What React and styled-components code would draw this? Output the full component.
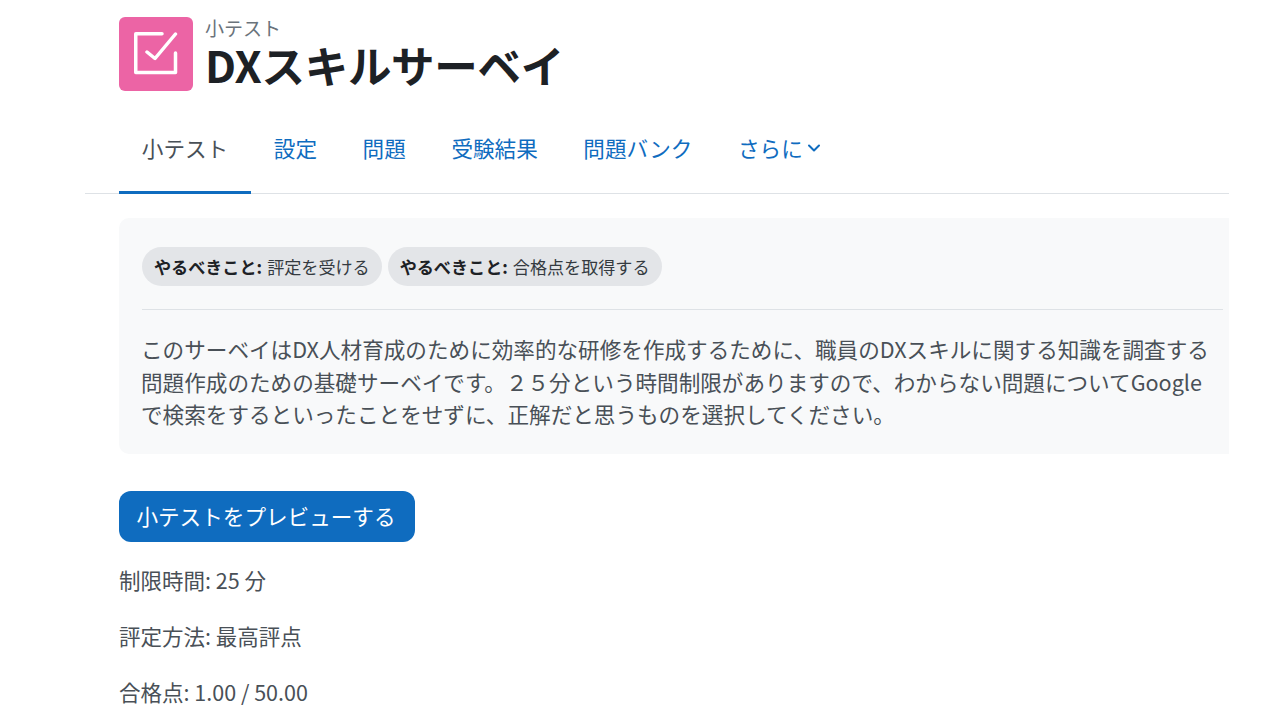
import React from 'react';
import styled, { createGlobalStyle } from 'styled-components';
import { ChevronDown } from 'lucide-react';

const GlobalStyle = createGlobalStyle`
  html, body {
    margin: 0;
    padding: 0;
    background: #fff;
    overflow: hidden;
  }
  body {
    font-family: "Noto Sans CJK JP", "Open Sans", sans-serif;
    color: #1d2125;
  }
`;

const Page = styled.div`
  width: 1144px;
  height: 720px;
  margin-left: 85px;
  overflow: hidden;
`;

const Header = styled.header`
  display: flex;
  align-items: flex-start;
  gap: 12px;
  padding: 17px 0 0 34px;
  height: 99px;
  box-sizing: border-box;
`;

const ActivityIcon = styled.div`
  width: 74px;
  height: 74px;
  border-radius: 6px;
  background: #ec64a5;
  display: flex;
  align-items: center;
  justify-content: center;
  flex: none;
`;

const TitleBlock = styled.div`
  display: flex;
  flex-direction: column;
  margin-top: -1px;
`;

const Kicker = styled.div`
  font-size: 19px;
  line-height: 24px;
  color: #6a737b;
`;

const Title = styled.h1`
  margin: 0;
  font-size: 43.5px;
  line-height: 49px;
  font-weight: 700;
  letter-spacing: -0.3px;
  color: #1d2125;
  white-space: nowrap;
`;

const Tabs = styled.nav`
  display: flex;
  height: 94px;
  padding-left: 34px;
  border-bottom: 1px solid #dee2e6;
`;

const Tab = styled.a`
  display: flex;
  align-items: center;
  padding: 4px 22.8px 0;
  font-size: 21.6px;
  color: ${p => (p.$active ? '#495057' : '#0f6cbf')};
  border-bottom: 3px solid ${p => (p.$active ? '#0f6cbf' : 'transparent')};
  margin-bottom: -1px;
  white-space: nowrap;
`;

const TabCaret = styled(ChevronDown)`
  margin: 2px 0 0 1px;
`;

const Panel = styled.section`
  margin: 24px 0 0 34px;
  height: 236px;
  box-sizing: border-box;
  padding: 29px 6px 0 23px;
  background: #f8f9fa;
  border-radius: 10px 0 0 10px;
`;

const Badges = styled.div`
  display: flex;
  gap: 6px;
  padding-bottom: 23px;
  border-bottom: 1px solid #dee2e6;
`;

const Badge = styled.div`
  display: flex;
  align-items: center;
  gap: 5px;
  height: 39px;
  padding: 0 12px;
  border-radius: 20px;
  background: #e3e5e8;
  font-size: 17.1px;
  color: #343a40;
  white-space: nowrap;
`;

const BadgeLabel = styled.strong`
  font-weight: 700;
  color: #1d2125;
`;

const Description = styled.p`
  margin: 23px 0 0 -1px;
  font-size: 21.6px;
  line-height: 32.5px;
  color: #495057;
`;

const DescriptionLine = styled.span`
  display: block;
  white-space: nowrap;
`;

const PreviewButton = styled.button`
  display: block;
  margin: 37px 0 0 34px;
  width: 296px;
  height: 51px;
  padding: 0 2px 2px 0;
  border: 0;
  border-radius: 12px;
  background: #0f6cbf;
  color: #fff;
  font-family: inherit;
  font-size: 21.6px;
`;

const Facts = styled.div`
  margin: 23px 0 0 34px;
  display: flex;
  flex-direction: column;
  gap: 26px;
`;

const Fact = styled.div`
  font-size: 21.5px;
  line-height: 30px;
  color: #495057;
`;

const tabs = ['設定', '問題', '受験結果', '問題バンク'];

export default function App() {
  return (
    <>
      <GlobalStyle />
      <Page>
        <Header>
          <ActivityIcon>
            <svg width="44" height="44" viewBox="0 0 44 44" fill="none" stroke="#fff" strokeWidth="3.5" strokeLinecap="round" strokeLinejoin="round">
              <path d="M28 1.75H1.75V40.5H41.5V21" />
              <path d="M13 20l8 6.5L41.5 2" />
            </svg>
          </ActivityIcon>
          <TitleBlock>
            <Kicker>小テスト</Kicker>
            <Title>DXスキルサーベイ</Title>
          </TitleBlock>
        </Header>
        <Tabs>
          <Tab $active>小テスト</Tab>
          {tabs.map(t => <Tab key={t}>{t}</Tab>)}
          <Tab>さらに<TabCaret size={20} strokeWidth={2.4} /></Tab>
        </Tabs>
        <Panel>
          <Badges>
            <Badge><BadgeLabel>やるべきこと:</BadgeLabel>評定を受ける</Badge>
            <Badge><BadgeLabel>やるべきこと:</BadgeLabel>合格点を取得する</Badge>
          </Badges>
          <Description>
            <DescriptionLine>このサーベイはDX人材育成のために効率的な研修を作成するために、職員のDXスキルに関する知識を調査する</DescriptionLine>
            <DescriptionLine>問題作成のための基礎サーベイです。２５分という時間制限がありますので、わからない問題についてGoogle</DescriptionLine>
            <DescriptionLine>で検索をするといったことをせずに、正解だと思うものを選択してください。</DescriptionLine>
          </Description>
        </Panel>
        <PreviewButton>小テストをプレビューする</PreviewButton>
        <Facts>
          <Fact>制限時間: 25 分</Fact>
          <Fact>評定方法: 最高評点</Fact>
          <Fact>合格点: 1.00 / 50.00</Fact>
        </Facts>
      </Page>
    </>
  );
}
